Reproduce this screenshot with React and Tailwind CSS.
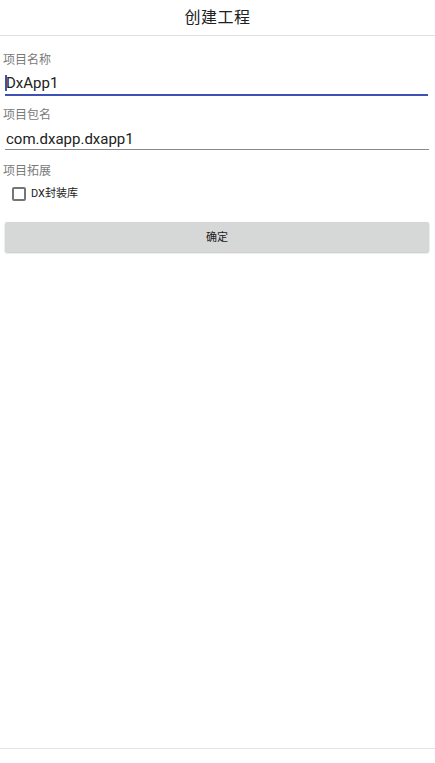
export default function App() {
  const cjk = { fontFamily: 'Roboto, "Noto Sans CJK SC", sans-serif' };
  return (
    <div className="w-[435px] h-[763px] bg-white flex flex-col text-[#212121]" style={cjk}>
      <div className="h-[36px] border-b border-[#e0e0e0] flex items-center justify-center">
        <span className="text-[16px] leading-[20px] tracking-[0.5px]">创建工程</span>
      </div>
      <div className="flex flex-col">
        <div className="mt-[16px] pl-[3px] text-[12px] leading-[16px] text-[#7a7a7a]">项目名称</div>
        <div className="mt-[4px] mx-[5px] mr-[7px] h-[24px] border-b-2 border-[#3f51b5] flex items-start">
          <span className="w-[2px] h-[16px] mt-[3px] bg-[#3f51b5]"></span>
          <span className="text-[15px] leading-[22px] -ml-[1px]">DxApp1</span>
        </div>
        <div className="mt-[11px] pl-[3px] text-[12px] leading-[16px] text-[#7a7a7a]">项目包名</div>
        <div className="mt-[4px] mx-[5px] mr-[6px] h-[23px] border-b border-[#8a8a8a] pl-[1px]">
          <span className="text-[15px] leading-[22px]">com.dxapp.dxapp1</span>
        </div>
        <div className="mt-[13px] pl-[3px] text-[12px] leading-[16px] text-[#7a7a7a]">项目拓展</div>
        <div className="mt-[4px] h-[21px] flex items-center pl-[12px]">
          <span className="w-[14px] h-[14px] border-2 border-[#757575] rounded-[2px]"></span>
          <span className="ml-[5px] text-[11px] leading-[14px]">DX封装库</span>
        </div>
        <button className="mt-[18px] mx-[5px] mr-[6px] h-[30px] bg-[#d6d7d7] rounded-[2px] shadow-[0_1px_2px_rgba(0,0,0,0.25)] text-[11px] leading-[14px] pt-[2px] text-[#212121] flex items-center justify-center">
          确定
        </button>
      </div>
      <div className="flex-1"></div>
      <div className="h-[15px] border-t border-[#e5e5e5]"></div>
    </div>
  );
}
